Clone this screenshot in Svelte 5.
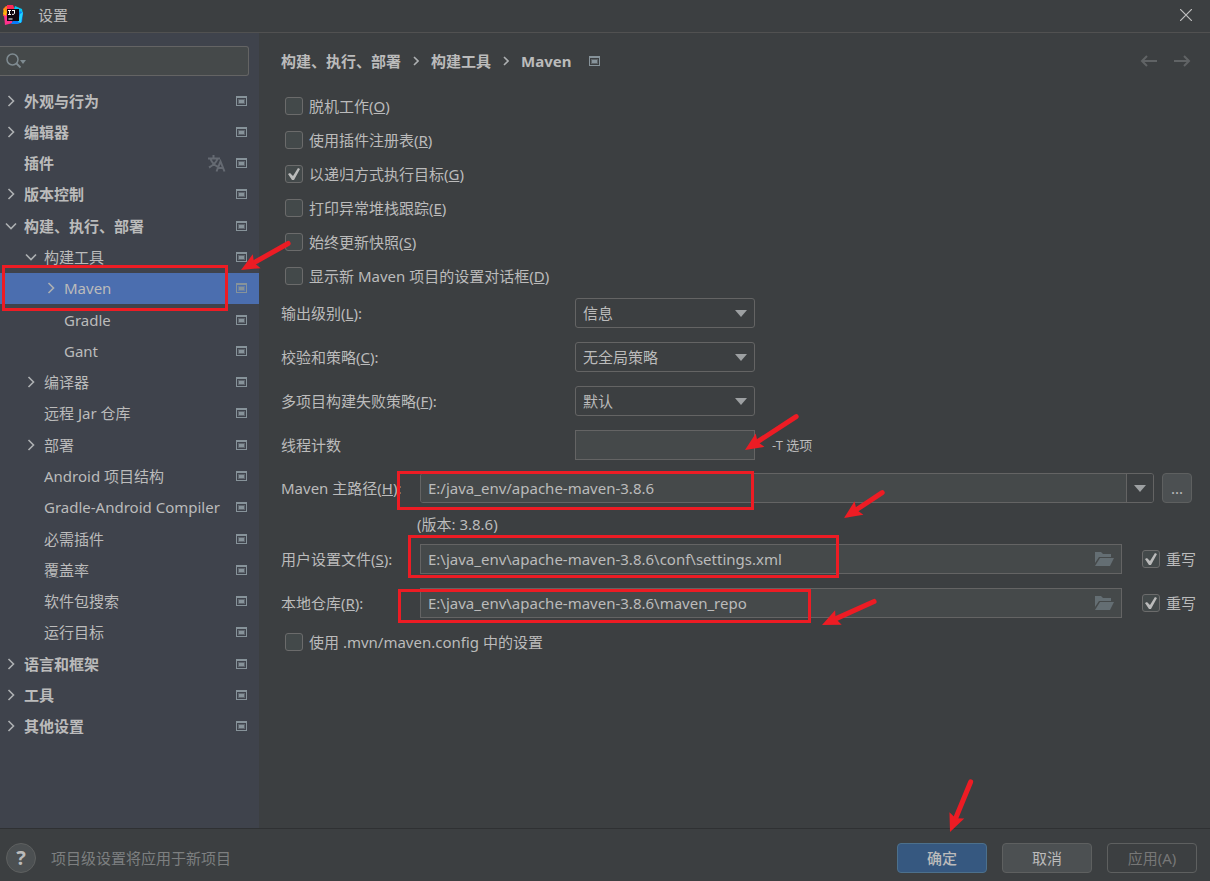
<script lang="ts">
    interface TreeItem {
        label: string;
        level: number;
        arrow?: 'open' | 'closed';
        translate?: boolean;
        selected?: boolean;
    }

    interface Option {
        text: string;
        key: string;
        checked: boolean;
    }

    const tree: TreeItem[] = [
        { label: '外观与行为', level: 0, arrow: 'closed' },
        { label: '编辑器', level: 0, arrow: 'closed' },
        { label: '插件', level: 0, translate: true },
        { label: '版本控制', level: 0, arrow: 'closed' },
        { label: '构建、执行、部署', level: 0, arrow: 'open' },
        { label: '构建工具', level: 1, arrow: 'open' },
        { label: 'Maven', level: 2, arrow: 'closed', selected: true },
        { label: 'Gradle', level: 2 },
        { label: 'Gant', level: 2 },
        { label: '编译器', level: 1, arrow: 'closed' },
        { label: '远程 Jar 仓库', level: 1 },
        { label: '部署', level: 1, arrow: 'closed' },
        { label: 'Android 项目结构', level: 1 },
        { label: 'Gradle-Android Compiler', level: 1 },
        { label: '必需插件', level: 1 },
        { label: '覆盖率', level: 1 },
        { label: '软件包搜索', level: 1 },
        { label: '运行目标', level: 1 },
        { label: '语言和框架', level: 0, arrow: 'closed' },
        { label: '工具', level: 0, arrow: 'closed' },
        { label: '其他设置', level: 0, arrow: 'closed' },
    ];

    let options: Option[] = $state([
        { text: '脱机工作', key: 'O', checked: false },
        { text: '使用插件注册表', key: 'R', checked: false },
        { text: '以递归方式执行目标', key: 'G', checked: true },
        { text: '打印异常堆栈跟踪', key: 'E', checked: false },
        { text: '始终更新快照', key: 'S', checked: false },
        { text: '显示新 Maven 项目的设置对话框', key: 'D', checked: false },
    ]);

    const choices = [
        { id: 'output', text: '输出级别', key: 'L', values: ['信息', '调试', '警告', '错误'] },
        { id: 'checksum', text: '校验和策略', key: 'C', values: ['无全局策略', '失败', '警告'] },
        { id: 'fail', text: '多项目构建失败策略', key: 'F', values: ['默认', '快速失败', '最后失败'] },
    ];

    let mavenHome = $state('E:/java_env/apache-maven-3.8.6');
    let threads = $state('');
    let search = $state('');
    let useConfig = $state(false);

    let paths = $state([
        { id: 'settings', text: '用户设置文件', key: 'S', value: 'E:\\java_env\\apache-maven-3.8.6\\conf\\settings.xml', override: true },
        { id: 'repo', text: '本地仓库', key: 'R', value: 'E:\\java_env\\apache-maven-3.8.6\\maven_repo', override: true },
    ]);

    // marks drawn over the dialog
    const boxes = [
        [2, 265, 228, 311],
        [397, 471, 754, 510],
        [408, 535, 839, 578],
        [398, 589, 811, 623],
    ];

    const arrows = [
        [289, 243, 241, 270],
        [797, 416, 745, 450],
        [883, 492, 844, 518],
        [875, 601, 822, 625],
        [971, 781, 950, 832],
    ].map(([x1, y1, x2, y2]) => ({
        x: x2,
        y: y2,
        length: Math.hypot(x1 - x2, y1 - y2),
        angle: (Math.atan2(y1 - y2, x1 - x2) * 180) / Math.PI,
    }));
</script>

{#snippet projectIcon()}
    <svg class="project-icon" width="11" height="10" viewBox="0 0 11 10" aria-hidden="true">
        <path fill="#87939a" fill-rule="evenodd" d="M0 0h11v10H0zM1 2v7h9V2z" />
        <path fill="#87939a" fill-opacity=".45" d="M2 3h7v5H2z" />
        <path fill="#87939a" d="M3 4h5v3H3z" />
    </svg>
{/snippet}

{#snippet downArrow()}
    <svg class="down-arrow" width="12" height="7" viewBox="0 0 12 7" aria-hidden="true">
        <path fill="#9da0a2" d="M0 0h12L6 7z" />
    </svg>
{/snippet}

<div class="dialog">
    <header class="titlebar">
        <svg width="20" height="20" viewBox="0 0 20 20" aria-hidden="true">
            <path fill="#fc801d" d="M3 1l7 2-4 9-6-1 1-4-1-3z" />
            <path fill="#fe2857" d="M4 0h6l2 5-8 10-4-5 4-3z" />
            <path fill="#ff318c" d="M1 10l6 1 3 7-8 2z" />
            <path fill="#fdb60d" d="M1 4l3 3-1 4-3-2z" />
            <path fill="#07c3f2" d="M12 1l7 3 1 5-4 4-5-9z" />
            <path fill="#087cfa" d="M17 6l3 2-1 9-4 2H8l2-3z" />
            <path fill="#21d4fd" d="M17 9l3-2-2 11-3-1z" />
            <path fill="#110710" d="M4 4h12v12H4z" />
            <path stroke="#fff" fill="none" d="M5 5.500h3M6.500 5v4M5 9.500h3M9 5.500h3M11.500 5v3.500q0 1-2.500 .9M5.500 14h4" />
        </svg>
        <h1>设置</h1>
        <button class="icon-button" type="button" aria-label="关闭">
            <svg width="12" height="12" viewBox="0 0 12 12"><path stroke="#bfbfbf" fill="none" stroke-width="1.2" d="M0 0l12 12M12 0L0 12" /></svg>
        </button>
    </header>

    <div class="body">
        <aside class="sidebar">
            <div class="search">
                <svg width="21" height="16" viewBox="0 0 21 16" aria-hidden="true">
                    <circle cx="6.500" cy="6.500" r="5.500" fill="none" stroke="#7f8b91" stroke-width="1.500" />
                    <path stroke="#7f8b91" stroke-width="1.800" d="M10.500 10.500l4 4" />
                    <path fill="#7f8b91" d="M14 7h6l-3 4z" />
                </svg>
                <input type="text" aria-label="搜索设置" bind:value={search} />
            </div>
            <ul class="tree">
                {#each tree as item}
                    <li class="node level-{item.level}" class:selected={item.selected}>
                        <span class="twisty">
                            {#if item.arrow === 'closed'}
                                <svg width="12" height="12" viewBox="0 0 12 12"><path d="M3.500 1l5 5-5 5" /></svg>
                            {:else if item.arrow === 'open'}
                                <svg width="12" height="12" viewBox="0 0 12 12"><path d="M1 3.500l5 5 5-5" /></svg>
                            {/if}
                        </span>
                        <span class="node-label">{item.label}</span>
                        {#if item.translate}
                            <svg class="translate" width="18" height="17" viewBox="0 0 18 17" aria-hidden="true">
                                <path d="M0 3.500h12M5.500 0v3.500M2.500 4q2 5 7.500 8M9.500 4Q7.500 9 1 12.500M8.500 16.500l4-10 4 10M10 13h5" />
                            </svg>
                        {/if}
                        {@render projectIcon()}
                    </li>
                {/each}
            </ul>
        </aside>

        <main class="content">
            <div class="crumbs">
                <h2>构建、执行、部署</h2>
                <svg width="6" height="10" viewBox="0 0 6 10"><path d="M1 1l4 4-4 4" /></svg>
                <h2>构建工具</h2>
                <svg width="6" height="10" viewBox="0 0 6 10"><path d="M1 1l4 4-4 4" /></svg>
                <h2>Maven</h2>
                {@render projectIcon()}
                <nav class="history">
                    <button class="icon-button" type="button" aria-label="后退" disabled>
                        <svg width="17" height="12" viewBox="0 0 17 12"><path d="M17 6H2M7 1L2 6l5 5" /></svg>
                    </button>
                    <button class="icon-button" type="button" aria-label="前进" disabled>
                        <svg width="17" height="12" viewBox="0 0 17 12"><path d="M0 6h15M10 1l5 5-5 5" /></svg>
                    </button>
                </nav>
            </div>

            <div class="options">
                {#each options as option}
                    <label class="check">
                        <input type="checkbox" bind:checked={option.checked} />
                        <span>{option.text}(<u>{option.key}</u>)</span>
                    </label>
                {/each}
            </div>

            <div class="choices">
                {#each choices as choice}
                    <label for={choice.id}>{choice.text}(<u>{choice.key}</u>):</label>
                    <div class="select">
                        <select id={choice.id}>
                            {#each choice.values as value}
                                <option>{value}</option>
                            {/each}
                        </select>
                        {@render downArrow()}
                    </div>
                {/each}
                <label for="threads">线程计数</label>
                <div class="threads">
                    <input id="threads" class="field" type="text" bind:value={threads} />
                    <span class="hint">-T 选项</span>
                </div>
            </div>

            <div class="home">
                <label for="home">Maven 主路径(<u>H</u>):</label>
                <div class="combo">
                    <input id="home" type="text" bind:value={mavenHome} />
                    <button type="button" aria-label="选择 Maven 主路径">{@render downArrow()}</button>
                </div>
                <button class="button browse" type="button">...</button>
            </div>
            <p class="version">(版本: 3.8.6)</p>

            <div class="paths">
                {#each paths as path}
                    <label for={path.id}>{path.text}(<u>{path.key}</u>):</label>
                    <div class="field path">
                        <input id={path.id} type="text" bind:value={path.value} />
                        <button class="icon-button" type="button" aria-label="浏览">
                            <svg width="19" height="14" viewBox="0 0 19 14">
                                <path fill="#646e73" d="M0 0h6l2 2h8v3H4L0 11zM5 6h14l-4 8H0z" />
                            </svg>
                        </button>
                    </div>
                    <label class="check">
                        <input type="checkbox" bind:checked={path.override} />
                        <span>重写</span>
                    </label>
                {/each}
            </div>

            <label class="check">
                <input type="checkbox" bind:checked={useConfig} />
                <span>使用 .mvn/maven.config 中的设置</span>
            </label>
        </main>
    </div>

    <footer class="footer">
        <button class="help" type="button" aria-label="帮助">?</button>
        <span class="note">项目级设置将应用于新项目</span>
        <button class="button primary" type="button">确定</button>
        <button class="button" type="button">取消</button>
        <button class="button" type="button" disabled>应用(A)</button>
    </footer>

    <svg class="marks" width="1210" height="881" viewBox="0 0 1210 881" aria-hidden="true">
        {#each boxes as [x1, y1, x2, y2]}
            <rect x={x1 + 1.5} y={y1 + 1.5} width={x2 - x1 - 3} height={y2 - y1 - 3} />
        {/each}
        {#each arrows as arrow}
            <g transform="translate({arrow.x} {arrow.y}) rotate({arrow.angle})">
                <path class="shaft" d="M13 0H{arrow.length - 1}" />
                <path class="head" d="M0 0l18-8-3 8 3 8z" />
            </g>
        {/each}
    </svg>
</div>

<style>
    :global(body) {
        margin: 0;
        background: #3c3f41;
    }

    .dialog,
    .dialog input,
    .dialog select,
    .dialog button {
        font-family: 'Noto Sans', 'Noto Sans CJK SC', sans-serif;
        font-size: 15px;
        line-height: 20px;
        color: #bbbbbb;
    }

    .dialog {
        position: relative;
        display: flex;
        flex-direction: column;
        min-height: 100vh;
        overflow: hidden;
        background: #3c3f41;
    }

    .dialog *,
    .dialog *::before {
        box-sizing: border-box;
    }

    input,
    select {
        min-width: 0;
        margin: 0;
        outline: none;
    }

    svg {
        display: block;
        flex: none;
    }

    h1,
    h2 {
        margin: 0;
        font-size: 15px;
        font-weight: 400;
    }

    .icon-button {
        padding: 0;
        border: none;
        background: transparent;
    }

    .titlebar {
        display: flex;
        align-items: center;
        height: 33px;
        padding: 0 18px 2px 3px;
        border-bottom: 1px solid #515151;
    }

    .titlebar h1 {
        flex: 1;
        padding-left: 15px;
    }

    .body {
        display: flex;
        flex: 1;
    }

    .sidebar {
        flex: none;
        width: 259px;
        background: #3f434c;
    }

    .search {
        display: flex;
        align-items: center;
        height: 30px;
        margin: 13px 10px 9px 0;
        padding-left: 6px;
        border: 1px solid #646464;
        border-left: none;
        border-radius: 0 3px 3px 0;
        background: #45494a;
    }

    .search input {
        flex: 1;
        border: none;
        background: transparent;
    }

    .tree {
        display: grid;
        grid-auto-rows: 1fr;
        height: 657px;
        margin: 0;
        padding: 0;
        list-style: none;
    }

    .node {
        display: flex;
        align-items: center;
        padding: 0 12px 0 5px;
        white-space: nowrap;
    }

    .level-0 {
        font-weight: 600;
    }

    .level-1 {
        padding-left: 25px;
    }

    .level-2 {
        padding-left: 45px;
    }

    .selected {
        background: #4b6eaf;
    }

    .twisty {
        width: 19px;
    }

    .twisty path,
    .crumbs > svg path {
        stroke: #adb0b2;
        stroke-width: 1.6;
    }

    .twisty path,
    .crumbs > svg:not(.project-icon) path {
        fill: none;
    }

    .crumbs > .project-icon path {
        stroke: none;
    }

    .node-label {
        flex: 1;
        min-width: 0;
    }

    .translate {
        margin-right: 10px;
        fill: none;
        stroke: #656a72;
        stroke-width: 2;
    }

    .content {
        flex: 1;
        min-width: 0;
        padding: 16px 14px 16px 22px;
    }

    .crumbs {
        display: flex;
        align-items: center;
        gap: 12px;
        height: 24px;
        margin-bottom: 16px;
    }

    .crumbs h2 {
        font-weight: 700;
    }

    .crumbs .project-icon {
        margin-left: 6px;
    }

    .history {
        display: flex;
        gap: 17px;
        margin-left: auto;
        padding-right: 5px;
    }

    .history path {
        fill: none;
        stroke: #606365;
        stroke-width: 2;
    }

    .check {
        display: flex;
        align-items: center;
        gap: 6px;
        height: 34px;
        padding-left: 4px;
    }

    .check input {
        flex: none;
        width: 18px;
        height: 18px;
        appearance: none;
        border: 1px solid #6b6b6b;
        border-radius: 3px;
        background: #43494a;
    }

    .check input:checked::before {
        content: '';
        display: block;
        width: 16px;
        height: 16px;
        background: #bbbbbb;
        clip-path: polygon(2px 8px, 4px 7px, 7px 10px, 12px 2px, 14px 3px, 8px 14px, 6px 14px);
    }

    .choices {
        display: grid;
        grid-template-columns: 294px 1fr;
        align-items: center;
        row-gap: 14px;
        padding-top: 5px;
    }

    .select {
        position: relative;
        width: 180px;
    }

    .select select {
        display: block;
        width: 100%;
        height: 30px;
        padding: 0 7px;
        appearance: none;
        border: 1px solid #646464;
        border-radius: 3px;
        background: #3c3f41;
    }

    .select .down-arrow {
        position: absolute;
        top: 12px;
        right: 8px;
        pointer-events: none;
    }

    .threads {
        display: flex;
        align-items: center;
        gap: 17px;
    }

    .field {
        height: 30px;
        border: 1px solid #646464;
        background: #45494a;
    }

    .threads .field {
        width: 180px;
    }

    .hint {
        font-size: 13px;
    }

    .home {
        display: grid;
        grid-template-columns: 139px 1fr 30px;
        align-items: center;
        margin-top: 13px;
        padding-right: 4px;
    }

    .combo {
        display: flex;
        height: 30px;
        margin-right: 8px;
        overflow: hidden;
        border: 1px solid #646464;
        border-radius: 3px;
    }

    .combo input,
    .path input {
        flex: 1;
        padding: 0 7px;
        border: none;
        background: #45494a;
    }

    .combo button {
        width: 27px;
        padding: 0 7px;
        border: none;
        border-left: 1px solid #646464;
        background: #3c3f41;
    }

    .version {
        margin: 11px 0 10px 136px;
    }

    .paths {
        display: grid;
        grid-template-columns: 139px 1fr auto;
        align-items: center;
        row-gap: 14px;
        margin-bottom: 7px;
    }

    .path {
        display: flex;
        align-items: center;
        padding-right: 7px;
    }

    .path input {
        height: 28px;
    }

    .paths .check {
        height: 30px;
        padding-left: 20px;
    }

    .footer {
        display: flex;
        align-items: center;
        gap: 15px;
        height: 53px;
        padding: 6px 13px 0 6px;
        border-top: 1px solid #2f3133;
    }

    .help {
        width: 30px;
        height: 30px;
        padding: 0;
        border: 1px solid #5e6060;
        border-radius: 50%;
        background: #4c5052;
    }

    .dialog .help {
        font-size: 20px;
        font-weight: 700;
    }

    .note {
        flex: 1;
        color: #7d7f80;
    }

    .button {
        width: 90px;
        height: 30px;
        padding: 0;
        border: 1px solid #5e6060;
        border-radius: 4px;
        background: #4c5052;
    }

    .button.primary {
        border-color: #4c708c;
        background: #365880;
        font-weight: 500;
    }

    .dialog .button:disabled {
        background: transparent;
        color: #777777;
    }

    .button.browse {
        width: 30px;
    }

    .marks {
        position: absolute;
        top: 0;
        left: 0;
        pointer-events: none;
    }

    .marks rect,
    .marks .shaft {
        fill: none;
        stroke: #ed1c24;
        stroke-width: 3;
    }

    .marks .shaft {
        stroke-width: 5;
        stroke-linecap: round;
    }

    .marks .head {
        fill: #ed1c24;
    }
</style>
